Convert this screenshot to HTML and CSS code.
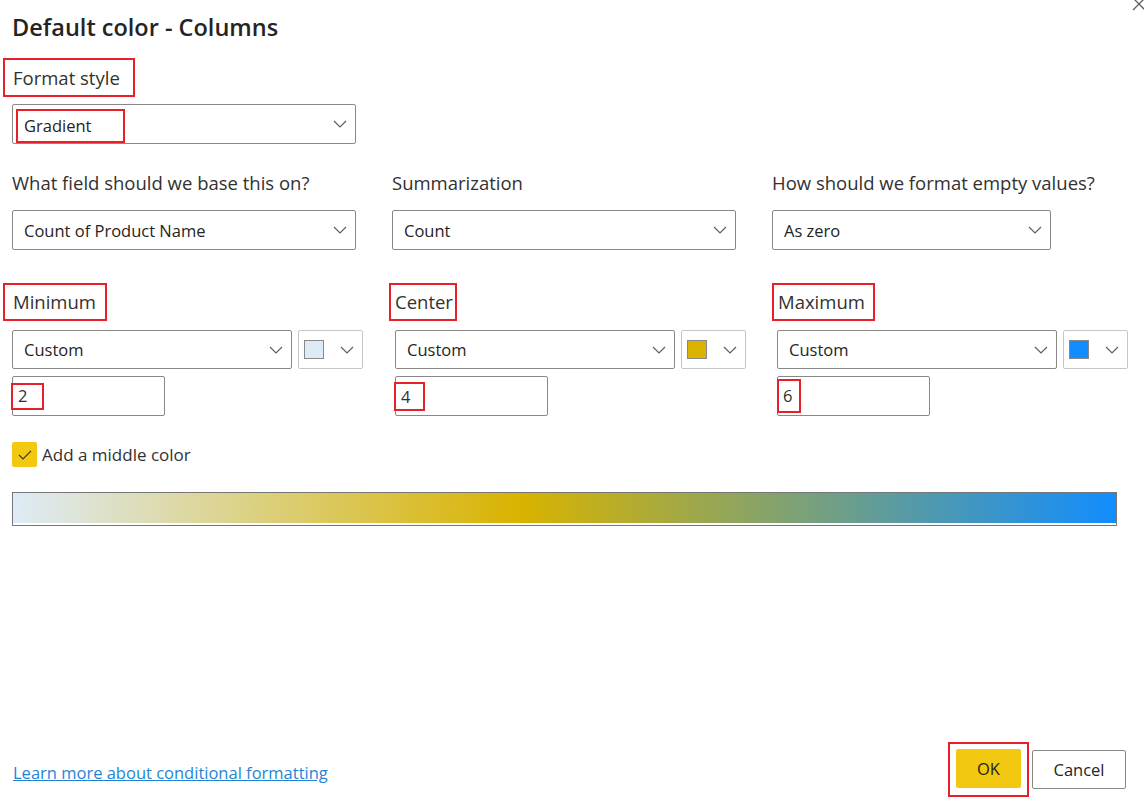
FILE: index.html
```html
<!DOCTYPE html>
<html lang="en">
<head>
    <meta charset="UTF-8">
    <meta name="viewport" content="width=device-width, initial-scale=1.0">
    <title>Default color - Columns</title>
    <link rel="stylesheet" href="styles.css">
</head>
<body>
    <div class="dialog">
        <button class="close" aria-label="Close">
            <svg width="14" height="14" viewBox="0 0 14 14"><path d="M1 1L13 13M13 1L1 13" stroke="#605e5c" stroke-width="1.3" fill="none"/></svg>
        </button>

        <h1>Default color - Columns</h1>

        <div class="format">
            <span class="mark label-mark">Format style</span>
            <div class="select select-wide">
                <span class="mark value-mark">Gradient</span>
                <svg class="chev" width="14" height="8" viewBox="0 0 14 8"><path d="M1 1L7 7L13 1" stroke="#605e5c" stroke-width="1.2" fill="none"/></svg>
            </div>
        </div>

        <div class="row row-fields">
            <div class="col">
                <div class="label">What field should we base this on?</div>
                <div class="select select-wide">
                    <span>Count of Product Name</span>
                    <svg class="chev" width="14" height="8" viewBox="0 0 14 8"><path d="M1 1L7 7L13 1" stroke="#605e5c" stroke-width="1.2" fill="none"/></svg>
                </div>
            </div>
            <div class="col">
                <div class="label">Summarization</div>
                <div class="select select-wide">
                    <span>Count</span>
                    <svg class="chev" width="14" height="8" viewBox="0 0 14 8"><path d="M1 1L7 7L13 1" stroke="#605e5c" stroke-width="1.2" fill="none"/></svg>
                </div>
            </div>
            <div class="col col-last">
                <div class="label">How should we format empty values?</div>
                <div class="select select-mid">
                    <span>As zero</span>
                    <svg class="chev" width="14" height="8" viewBox="0 0 14 8"><path d="M1 1L7 7L13 1" stroke="#605e5c" stroke-width="1.2" fill="none"/></svg>
                </div>
            </div>
        </div>

        <div class="row row-range">
            <div class="range range-min">
                <span class="mark label-mark">Minimum</span>
                <div class="pickers">
                    <div class="select select-custom">
                        <span>Custom</span>
                        <svg class="chev" width="14" height="8" viewBox="0 0 14 8"><path d="M1 1L7 7L13 1" stroke="#605e5c" stroke-width="1.2" fill="none"/></svg>
                    </div>
                    <div class="color-btn">
                        <span class="swatch swatch-min"></span>
                        <svg class="chev" width="14" height="8" viewBox="0 0 14 8"><path d="M1 1L7 7L13 1" stroke="#605e5c" stroke-width="1.2" fill="none"/></svg>
                    </div>
                </div>
                <div class="number"><span class="mark num-mark">2</span></div>
            </div>
            <div class="range range-center">
                <span class="mark label-mark">Center</span>
                <div class="pickers">
                    <div class="select select-custom">
                        <span>Custom</span>
                        <svg class="chev" width="14" height="8" viewBox="0 0 14 8"><path d="M1 1L7 7L13 1" stroke="#605e5c" stroke-width="1.2" fill="none"/></svg>
                    </div>
                    <div class="color-btn">
                        <span class="swatch swatch-center"></span>
                        <svg class="chev" width="14" height="8" viewBox="0 0 14 8"><path d="M1 1L7 7L13 1" stroke="#605e5c" stroke-width="1.2" fill="none"/></svg>
                    </div>
                </div>
                <div class="number"><span class="mark num-mark">4</span></div>
            </div>
            <div class="range range-max">
                <span class="mark label-mark">Maximum</span>
                <div class="pickers">
                    <div class="select select-custom">
                        <span>Custom</span>
                        <svg class="chev" width="14" height="8" viewBox="0 0 14 8"><path d="M1 1L7 7L13 1" stroke="#605e5c" stroke-width="1.2" fill="none"/></svg>
                    </div>
                    <div class="color-btn">
                        <span class="swatch swatch-max"></span>
                        <svg class="chev" width="14" height="8" viewBox="0 0 14 8"><path d="M1 1L7 7L13 1" stroke="#605e5c" stroke-width="1.2" fill="none"/></svg>
                    </div>
                </div>
                <div class="number"><span class="mark num-mark">6</span></div>
            </div>
        </div>

        <label class="check">
            <span class="box">
                <svg width="14" height="10" viewBox="0 0 14 10"><path d="M1 5L5 9L13 1" stroke="#3b3a39" stroke-width="1.1" fill="none"/></svg>
            </span>
            Add a middle color
        </label>

        <div class="gradient"></div>

        <div class="footer">
            <a class="learn" href="#">Learn more about conditional formatting</a>
            <div class="actions">
                <span class="mark ok-mark"><button class="btn btn-ok">OK</button></span>
                <button class="btn btn-cancel">Cancel</button>
            </div>
        </div>
    </div>
</body>
</html>
```

FILE: styles.css
```css
* {
    box-sizing: border-box;
}

body {
    margin: 0;
    background: #fff;
    font-family: 'Open Sans', 'Noto Sans', sans-serif;
    color: #323130;
}

.dialog {
    position: relative;
    height: 100vh;
    padding: 12px 18px 7px 12px;
    display: flex;
    flex-direction: column;
}

.close {
    position: absolute;
    top: -3px;
    right: -2px;
    border: none;
    background: none;
    padding: 0;
}

h1 {
    margin: 0;
    font-size: 23.5px;
    line-height: 30px;
    font-weight: 600;
    color: #252423;
}

/* red annotation frames */
.mark {
    display: inline-block;
    border: 2px solid #e8202a;
}

.label-mark {
    font-size: 18.5px;
    line-height: 34px;
    padding: 0 8px;
    margin-left: -9px;
    align-self: flex-start;
    white-space: nowrap;
}

.format {
    margin-top: 16px;
    display: flex;
    flex-direction: column;
}

.format .label-mark {
    height: 39px;
    line-height: 35px;
    width: 132px;
}

.select {
    height: 40px;
    border: 1px solid #8a8886;
    border-radius: 2px;
    display: flex;
    align-items: center;
    justify-content: space-between;
    padding: 0 8px 0 11px;
    font-size: 16.5px;
    color: #252423;
}

.format .select {
    margin-top: 7px;
    padding-left: 3px;
}

.value-mark {
    width: 109px;
    height: 34px;
    line-height: 30px;
    padding-left: 6px;
    margin-top: 4px;
}

.select-wide {
    width: 344px;
}

.select-mid {
    width: 279px;
}

.chev {
    flex-shrink: 0;
}

.row {
    display: flex;
}

.row-fields {
    margin-top: 27px;
}

.row-fields .col {
    width: 380px;
    flex-shrink: 0;
}

.row-fields .col-last {
    width: auto;
}

.label {
    font-size: 18.5px;
    line-height: 24px;
    white-space: nowrap;
}

.row-fields .select {
    margin-top: 15px;
}

.row-range {
    margin-top: 33px;
}

.range {
    display: flex;
    flex-direction: column;
    flex-shrink: 0;
}

.range-min {
    width: 383px;
}

.range-center {
    width: 382px;
}

.range .label-mark {
    height: 38px;
    line-height: 34px;
}

.range-min .label-mark {
    width: 104px;
}

.range-center .label-mark {
    width: 68px;
    margin-left: -6px;
    padding-left: 4px;
}

.range-max .label-mark {
    width: 103px;
    margin-left: -5px;
    padding-left: 4px;
}

.pickers {
    margin-top: 9px;
    display: flex;
    gap: 6px;
}

.select-custom {
    width: 280px;
    height: 39px;
}

.color-btn {
    width: 65px;
    height: 39px;
    border: 1px solid #c8c6c4;
    border-radius: 2px;
    display: flex;
    align-items: center;
    justify-content: space-between;
    padding: 0 8px 0 5px;
}

.swatch {
    width: 20px;
    height: 19px;
    border: 1px solid #8a8886;
}

.swatch-min {
    background: #deebf7;
}

.swatch-center {
    background: #d9b300;
}

.swatch-max {
    background: #118dff;
}

.number {
    margin-top: 7px;
    width: 153px;
    height: 40px;
    border: 1px solid #8a8886;
    border-radius: 2px;
    display: flex;
    align-items: center;
}

.num-mark {
    font-size: 16.5px;
    line-height: 22px;
    height: 27px;
    padding: 0 0 0 5px;
    margin-left: -2px;
    width: 33px;
    color: #323130;
}

.range-center .num-mark {
    width: 31px;
    height: 29px;
    line-height: 25px;
}

.range-max .num-mark {
    width: 24px;
    height: 34px;
    line-height: 30px;
    padding-left: 4px;
    margin-left: -1px;
}

.check {
    margin-top: 26px;
    display: flex;
    align-items: center;
    gap: 5px;
    font-size: 17px;
    color: #323130;
}

.box {
    width: 25px;
    height: 25px;
    background: #f2c811;
    border-radius: 2px;
    display: flex;
    align-items: center;
    justify-content: center;
}

.gradient {
    margin-top: 25px;
    width: 1105px;
    height: 34px;
    border: 1px solid #767676;
    padding-bottom: 2px;
    background: linear-gradient(to right, #deebf7 0%, #d9b300 46%, #118dff 100%);
    background-clip: content-box;
}

.footer {
    margin-top: auto;
    display: flex;
    align-items: center;
    justify-content: space-between;
}

.learn {
    margin-left: 1px;
    font-size: 16.5px;
    color: #1f84d8;
    text-decoration: underline;
    margin-top: 6px;
}

.actions {
    display: flex;
    align-items: center;
    gap: 3px;
}

.ok-mark {
    padding: 5px 6px 7px;
}

.btn {
    height: 39px;
    border-radius: 2px;
    font-family: inherit;
    font-size: 16.5px;
    color: #252423;
    cursor: pointer;
}

.btn-ok {
    width: 65px;
    background: #f2c811;
    border: none;
    display: block;
}

.btn-cancel {
    width: 94px;
    background: #fff;
    border: 1px solid #8a8886;
}
```
